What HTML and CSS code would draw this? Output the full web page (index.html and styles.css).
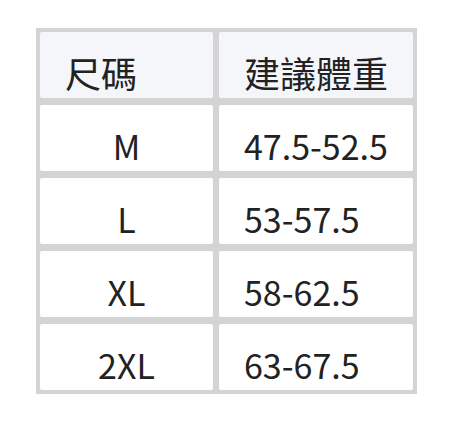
FILE: index.html
```html
<!DOCTYPE html>
<html lang="zh-Hant">
<head>
<meta charset="utf-8">
<link rel="stylesheet" href="styles.css">
</head>
<body>
<div class="size-table">
  <div class="cell head">尺碼</div>
  <div class="cell head">建議體重</div>
  <div class="cell size">M</div>
  <div class="cell weight">47.5-52.5</div>
  <div class="cell size">L</div>
  <div class="cell weight">53-57.5</div>
  <div class="cell size">XL</div>
  <div class="cell weight">58-62.5</div>
  <div class="cell size">2XL</div>
  <div class="cell weight">63-67.5</div>
</div>
</body>
</html>
```
FILE: styles.css
```css
html, body {
  margin: 0;
  padding: 0;
  background: #ffffff;
}
body {
  font-family: "Noto Sans CJK TC", "Noto Sans", sans-serif;
  color: #222222;
}
.size-table {
  display: grid;
  grid-template-columns: 173px 194px;
  grid-auto-rows: 66px;
  gap: 7px 6px;
  padding: 4px;
  background: #d4d4d4;
  width: max-content;
  margin: 28px 0 0 36px;
}
.cell {
  background: #ffffff;
  border-radius: 2px;
  font-size: 34px;
  line-height: 34px;
  padding-top: 24px;
  box-sizing: border-box;
  white-space: nowrap;
}
.head {
  background: #f5f6fa;
  padding-left: 25px;
  font-size: 36px;
  line-height: 36px;
  padding-top: 22px;
}
.size {
  text-align: center;
}
.weight {
  padding-left: 25px;
}
```
